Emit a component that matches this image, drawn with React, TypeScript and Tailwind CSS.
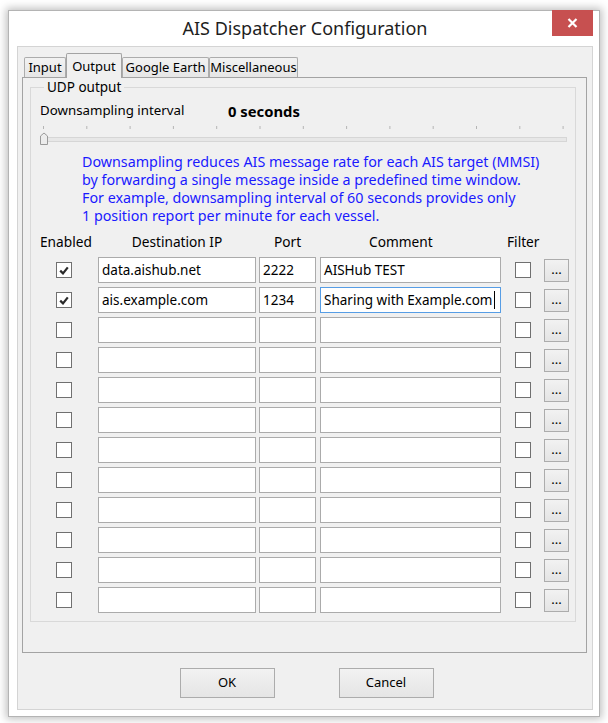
import React from "react";

interface Row {
  on: boolean;
  ip: string;
  port: string;
  comment: string;
  focus?: boolean;
}

const rows: Row[] = [
  { on: true, ip: "data.aishub.net", port: "2222", comment: "AISHub TEST" },
  { on: true, ip: "ais.example.com", port: "1234", comment: "Sharing with Example.com", focus: true },
  ...Array.from({ length: 10 }, () => ({ on: false, ip: "", port: "", comment: "" })),
];

const tabs = [
  { label: "Input", w: "w-[42px]" },
  { label: "Output", w: "w-[56px]", active: true },
  { label: "Google Earth", w: "w-[87px]" },
  { label: "Miscellaneous", w: "w-[89px]" },
];

const CheckBox = ({ checked }: { checked?: boolean }) => (
  <span className="flex h-[16px] w-[16px] items-center justify-center border border-[#707070] bg-white">
    {checked && (
      <svg width="10" height="9" viewBox="0 0 10 9">
        <path d="M1.2 4.6 L4 7.4 L8.8 1.4" fill="none" stroke="#2b2b2b" strokeWidth="2.2" />
      </svg>
    )}
  </span>
);

const Field = ({ w, text, focus }: { w: string; text: string; focus?: boolean }) => (
  <div
    className={`${w} flex h-[26px] items-center border bg-white pl-[3px] text-[13.5px] text-black ${
      focus ? "border-[#569de5]" : "border-[#ababab]"
    }`}
  >
    <span className="whitespace-nowrap">{text}</span>
    {focus && <span className="ml-px h-[18px] w-px bg-black" />}
  </div>
);

// slider ticks, drawn from x=40 of the page
const ticks = Array.from({ length: 13 }, (_, i) => 3.5 + i * 43.3);

const App: React.FC = () => {
  return (
    <div className="min-h-screen w-full bg-white pl-[8px] pt-[10px] font-['Noto_Sans',sans-serif] text-[13px] text-black">
      {/* window */}
      <div className="relative flex h-[707px] w-[592px] flex-col border border-[#b4b4b4] bg-white pb-[6px] pl-[8px] pr-[6px] shadow-[0_0_8px_2px_rgba(0,0,0,0.25)]">
        {/* title bar */}
        <div className="flex h-[35px] shrink-0 items-center justify-center pb-[1px] text-[18px] text-[#1e1e1e]">
          AIS Dispatcher Configuration
        </div>
        <button className="absolute right-[6px] top-[-1px] flex h-[26px] w-[41px] items-center justify-center bg-[#c75050]">
          <svg width="11" height="10" viewBox="0 0 11 10">
            <path d="M1.5 1 L9.5 9 M9.5 1 L1.5 9" stroke="#fff" strokeWidth="2.2" />
          </svg>
        </button>

        {/* client area */}
        <div className="flex flex-1 flex-col border border-[#d4d4d4] bg-[#f0f0f0]">
          {/* tabs */}
          <div className="ml-[6px] mt-[6px] flex items-end">
            {tabs.map((t) =>
              t.active ? (
                <div
                  key={t.label}
                  className={`${t.w} relative z-10 -mb-px flex h-[25px] items-start justify-center rounded-t-[2px] border border-b-0 border-[#a3a3a3] bg-[#f0f0f0] pt-[3px]`}
                >
                  {t.label}
                </div>
              ) : (
                <div
                  key={t.label}
                  className={`${t.w} flex h-[20px] items-center justify-center rounded-t-[2px] border border-b-0 border-[#acacac] bg-gradient-to-b from-[#f2f2f2] to-[#e6e6e6] pt-[1px]`}
                >
                  {t.label}
                </div>
              )
            )}
          </div>

          {/* tab pane */}
          <div className="ml-[4px] mr-[5px] border border-[#a3a3a3] bg-[#f0f0f0] pb-[30px]">
            <fieldset className="ml-[7px] mr-[10px] border border-[#d9d9d9] pb-[8px] pl-[9px]">
              <legend className="ml-[4px] px-[3px] text-[13.5px] leading-[18px]">UDP output</legend>

              <div className="mt-[6px] flex h-[18px] items-center text-[13.3px]">
                <span className="w-[188px]">Downsampling interval</span>
                <span className="text-[14.8px] font-bold">0 seconds</span>
              </div>

              {/* slider */}
              <svg className="mt-[5px] block" width="528" height="21" viewBox="0 0 528 21">
                {ticks.map((x) => (
                  <line key={x} x1={x} y1="1" x2={x} y2="4" stroke="#b5b5b5" strokeWidth="1" />
                ))}
                <rect x="0.5" y="12.5" width="526" height="4" fill="#e7e7e7" stroke="#d6d6d6" />
                <path d="M0.5 19.5 L7.5 19.5 L7.5 11 L4 8 L0.5 11 Z" fill="#ececec" stroke="#9a9a9a" />
              </svg>

              <div className="ml-[42px] mt-[7px] text-[14.3px] leading-[18px] text-[#1a1aff]">
                <div>Downsampling reduces AIS message rate for each AIS target (MMSI)</div>
                <div>by forwarding a single message inside a predefined time window.</div>
                <div>For example, downsampling interval of 60 seconds provides only</div>
                <div>1 position report per minute for each vessel.</div>
              </div>

              {/* header */}
              <div className="mt-[8px] flex h-[18px] items-center text-[13.7px]">
                <span className="w-[48px] text-center">Enabled</span>
                <span className="ml-[10px] w-[158px] text-center">Destination IP</span>
                <span className="ml-[3px] w-[57px] text-center">Port</span>
                <span className="ml-[4px] w-[181px] pl-[49px]">Comment</span>
                <span className="ml-[6px] w-[32px] text-center">Filter</span>
              </div>

              {/* rows */}
              <div className="mt-[6px] flex flex-col gap-[4px]">
                {rows.map((r, i) => (
                  <div key={i} className="flex h-[26px] items-center">
                    <div className="flex w-[48px] justify-center">
                      <CheckBox checked={r.on} />
                    </div>
                    <div className="ml-[10px]">
                      <Field w="w-[158px]" text={r.ip} />
                    </div>
                    <div className="ml-[3px]">
                      <Field w="w-[57px]" text={r.port} />
                    </div>
                    <div className="ml-[4px]">
                      <Field w="w-[181px]" text={r.comment} focus={r.focus} />
                    </div>
                    <div className="ml-[14px]">
                      <CheckBox />
                    </div>
                    <button className="ml-[13px] flex h-[23px] w-[25px] items-end justify-center border border-[#acacac] bg-gradient-to-b from-[#f2f2f2] to-[#e4e4e4] pb-[5px] text-[13px] leading-none">
                      ...
                    </button>
                  </div>
                ))}
              </div>
            </fieldset>
          </div>

          {/* buttons */}
          <div className="mt-[15px] flex justify-center gap-[64px] pl-[3px]">
            <button className="h-[30px] w-[95px] border border-[#acacac] bg-gradient-to-b from-[#f2f2f2] to-[#e5e5e5]">
              OK
            </button>
            <button className="h-[30px] w-[95px] border border-[#acacac] bg-gradient-to-b from-[#f2f2f2] to-[#e5e5e5]">
              Cancel
            </button>
          </div>
        </div>
      </div>
    </div>
  );
};

export default App;
